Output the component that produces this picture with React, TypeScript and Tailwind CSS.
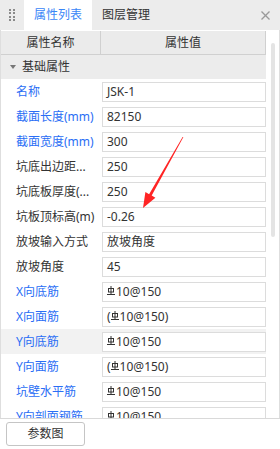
import React from "react";

const Rebar = () => (
  <svg width="8" height="10" viewBox="0 0 8 10" className="inline-block mr-[1px] -mt-[3px] align-middle">
    <line x1="4" y1="0" x2="4" y2="8.5" stroke="#333" strokeWidth="1" />
    <rect x="1.5" y="2.5" width="5" height="3.5" fill="none" stroke="#333" strokeWidth="1" />
    <line x1="0" y1="8.5" x2="8" y2="8.5" stroke="#333" strokeWidth="1" />
  </svg>
);

type Row = { label: string; value: React.ReactNode; blue?: boolean; hl?: boolean };

const rows: Row[] = [
  { label: "名称", value: "JSK-1", blue: true },
  { label: "截面长度(mm)", value: "82150", blue: true },
  { label: "截面宽度(mm)", value: "300", blue: true },
  { label: "坑底出边距...", value: "250" },
  { label: "坑底板厚度(...", value: "250" },
  { label: "坑板顶标高(m)", value: "-0.26" },
  { label: "放坡输入方式", value: "放坡角度" },
  { label: "放坡角度", value: "45" },
  { label: "X向底筋", value: <><Rebar />10@150</>, blue: true },
  { label: "X向面筋", value: <>(<Rebar />10@150)</>, blue: true },
  { label: "Y向底筋", value: <><Rebar />10@150</>, blue: true, hl: true },
  { label: "Y向面筋", value: <>(<Rebar />10@150)</>, blue: true },
  { label: "坑壁水平筋", value: <><Rebar />10@150</>, blue: true },
  { label: "Y向剖面钢筋", value: <><Rebar />10@150</>, blue: true },
];

export default function App() {
  return (
    <div
      className="relative w-[280px] h-[449px] bg-white overflow-hidden text-[12px] text-[#333]"
      style={{ fontFamily: '"Noto Sans", "Noto Sans CJK SC", sans-serif' }}
    >
      {/* Tab bar */}
      <div className="flex h-[30px] bg-[#ececec] items-stretch">
        <div className="w-[24px] flex items-center justify-center">
          <div className="grid grid-cols-2 gap-x-[2px] gap-y-[1.5px]">
            {Array.from({ length: 8 }).map((_, i) => (
              <div key={i} className="w-[2px] h-[2px] bg-[#8a8a8a]" />
            ))}
          </div>
        </div>
        <div className="w-[68px] bg-white flex items-center justify-center text-[#3a86f7]">属性列表</div>
        <div className="pl-[10px] flex items-center text-[#333]">图层管理</div>
        <div className="ml-auto pr-[10px] flex items-center">
          <svg width="9" height="9" viewBox="0 0 9 9">
            <line x1="0.5" y1="0.5" x2="8.5" y2="8.5" stroke="#9a9a9a" strokeWidth="1.3" />
            <line x1="8.5" y1="0.5" x2="0.5" y2="8.5" stroke="#9a9a9a" strokeWidth="1.3" />
          </svg>
        </div>
      </div>

      {/* Content */}
      <div className="flex h-[388px] border-l border-r border-[#dedede] overflow-hidden">
        <div className="w-[265px] flex flex-col pt-px">
          <div className="flex h-[24px] bg-[#ebebeb] border-b border-r border-[#d0d0d0] shrink-0">
            <div className="w-[100px] border-r border-[#d0d0d0] flex items-center justify-center">属性名称</div>
            <div className="flex-1 flex items-center justify-center">属性值</div>
          </div>
          <div className="flex h-[24px] bg-[#ececec] items-center shrink-0">
            <svg width="6" height="4" viewBox="0 0 6 4" className="ml-[9px] mr-[6px]">
              <polygon points="0,0 6,0 3,4" fill="#777" />
            </svg>
            <span className="text-[#333]">基础属性</span>
          </div>
          {rows.map((r, i) => (
            <div key={i} className={`flex h-[25px] shrink-0 pt-[3px] pb-[2px] ${r.hl ? "bg-[#f2f2f2]" : "bg-white"}`}>
              <div
                className={`w-[100px] pl-[15px] flex items-center whitespace-nowrap overflow-hidden ${r.blue ? "text-[#2a6ef5]" : "text-[#333]"}`}
              >
                {r.label}
              </div>
              <div className="ml-px w-[164px] h-[20px] border border-[#dcdcdc] bg-white flex items-center pl-[4px] whitespace-nowrap text-[#333]">
                <span>{r.value}</span>
              </div>
            </div>
          ))}
        </div>
        <div className="flex-1">
          <div className="mt-[13px] ml-[5px] w-[4px] h-[194px] bg-[#e4e4e4] rounded-[2px]" />
        </div>
      </div>

      {/* Bottom */}
      <div className="h-[31px] border-t border-[#d9d9d9] flex items-center px-[6px]">
        <button className="w-[79px] h-[24px] border border-[#c5c5c5] rounded-[3px] bg-white flex items-center justify-center text-[#333]">
          参数图
        </button>
      </div>

      {/* Red arrow annotation */}
      <svg className="absolute inset-0 pointer-events-none" width="280" height="449" viewBox="0 0 280 449">
        <polygon
          points="183.4,137.1 151.7,195.6 155.4,197.8 143,208 145.4,192.0 149.1,194.2 182.6,136.9"
          fill="#ff2424"
        />
      </svg>
    </div>
  );
}
